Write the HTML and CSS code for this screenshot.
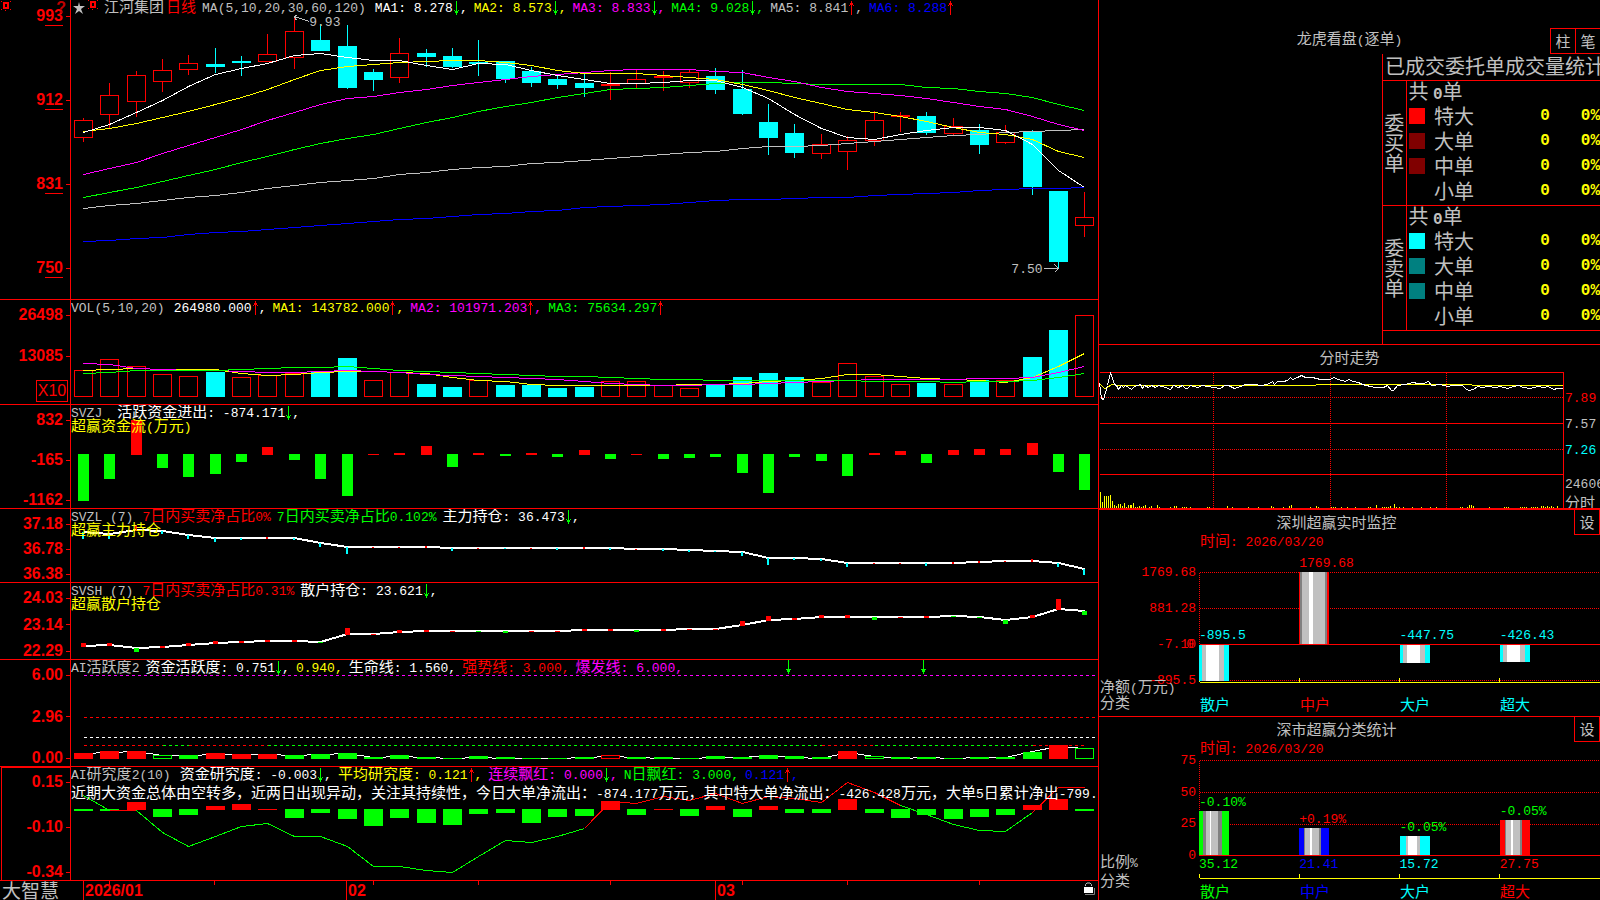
FILE: index.html
```html
<!DOCTYPE html>
<html lang="zh-CN">
<head>
    <meta charset="UTF-8">
    <meta name="viewport" content="width=device-width, initial-scale=1.0">
    <title>江河集团 日线 - 大智慧</title>
    <link rel="stylesheet" href="styles.css">
</head>
<body>

    <svg class="defs" width="0" height="0">
        <symbol id="down" viewBox="0 0 7 14">
            <path d="M3 0h1v14h-1zM2 10h3v2h-3zM1 9h1v1h-1zM5 9h1v1h-1z" fill="#0f0"/>
        </symbol>
        <symbol id="up" viewBox="0 0 7 14">
            <path d="M3 0h1v14h-1zM2 2h3v2h-3zM1 4h1v1h-1zM5 4h1v1h-1z" fill="#f00"/>
        </symbol>
        <symbol id="gear" viewBox="0 0 10 10">
            <path d="M3 2h4v5h-4z" fill="none" stroke="#f00" stroke-width="2"/>
            <path d="M0 0h1v1h-1zM9 0h1v1h-1zM0 8h1v1h-1zM9 8h1v1h-1zM4 9h1v1h-1z" fill="#f00"/>
        </symbol>
    </svg>

    <main class="charts">
        <section class="panel">
            <div class="axis axis-price">
                <svg class="corner" width="10" height="10"><use href="#gear"/></svg>
                <span class="help">?</span>
                <span class="label">9<u>93</u></span>
                <span class="label">9<u>12</u></span>
                <span class="label">8<u>31</u></span>
                <span class="label">7<u>50</u></span>
            </div>
            <div class="plot">
                <svg id="price" viewBox="0 0 1027 299" preserveAspectRatio="none"></svg>
                <div class="legend">
                    <svg class="star" width="12" height="12" viewBox="0 0 12 12"><path d="M6 0l1 4h5l-4 3 2 5-4-3-4 3 2-5-4-3h5z" fill="#c0c0c0"/></svg>
                    <svg class="gear" width="10" height="10"><use href="#gear"/></svg>
                    <span class="silver"><b class="cn">江河集团</b></span>
                    <span class="red period"><b class="cn">日线</b></span>
                    <span class="silver title">MA(5,10,20,30,60,120)</span>
                    <span class="white">MA1: 8.278<svg class="arrow"><use href="#down"/></svg>,</span>
                    <span class="yellow">MA2: 8.573<svg class="arrow"><use href="#down"/></svg>,</span>
                    <span class="magenta">MA3: 8.833<svg class="arrow"><use href="#down"/></svg>,</span>
                    <span class="green">MA4: 9.028<svg class="arrow"><use href="#down"/></svg>,</span>
                    <span class="silver">MA5: 8.841<svg class="arrow"><use href="#up"/></svg>,</span>
                    <span class="blue">MA6: 8.288<svg class="arrow"><use href="#up"/></svg></span>
                </div>
                <span class="mark mark-high">9.93</span>
                <span class="mark mark-low">7.50</span>
            </div>
        </section>

        <section class="panel">
            <div class="axis axis-vol">
                <span class="label">26498</span>
                <span class="label">13085</span>
                <span class="unit">X10</span>
            </div>
            <div class="plot">
                <svg id="volume" viewBox="0 0 1027 104" preserveAspectRatio="none"></svg>
                <div class="legend">
                    <span class="silver title">VOL(5,10,20)</span>
                    <span class="white">264980.000<svg class="arrow"><use href="#up"/></svg>,</span>
                    <span class="yellow">MA1: 143782.000<svg class="arrow"><use href="#up"/></svg>,</span>
                    <span class="magenta">MA2: 101971.203<svg class="arrow"><use href="#up"/></svg>,</span>
                    <span class="green">MA3: 75634.297<svg class="arrow"><use href="#up"/></svg></span>
                </div>
            </div>
        </section>

        <section class="panel">
            <div class="axis">
                <span class="label">832</span>
                <span class="label">-165</span>
                <span class="label">-1162</span>
            </div>
            <div class="plot">
                <svg id="flow" viewBox="0 0 1027 103" preserveAspectRatio="none"></svg>
                <div class="legend">
                    <span class="silver title wide">SVZJ</span>
                    <span class="white"><b class="cn">活跃资金进出</b>: -874.171<svg class="arrow"><use href="#down"/></svg>,</span>
                </div>
                <div class="caption"><b class="cn">超赢资金流</b>(<b class="cn">万元</b>)</div>
            </div>
        </section>

        <section class="panel">
            <div class="axis">
                <span class="label">37.18</span>
                <span class="label">36.78</span>
                <span class="label">36.38</span>
            </div>
            <div class="plot">
                <svg id="major" viewBox="0 0 1027 73" preserveAspectRatio="none"></svg>
                <div class="legend">
                    <span class="silver title">SVZL (7)</span>
                    <span class="red">7<b class="cn">日内买卖净占比</b>0%</span>
                    <span class="green">7<b class="cn">日内买卖净占比</b>0.102%</span>
                    <span class="white"><b class="cn">主力持仓</b>: 36.473<svg class="arrow"><use href="#down"/></svg>,</span>
                </div>
                <div class="caption"><b class="cn">超赢主力持仓</b></div>
            </div>
        </section>

        <section class="panel">
            <div class="axis">
                <span class="label">24.03</span>
                <span class="label">23.14</span>
                <span class="label">22.29</span>
            </div>
            <div class="plot">
                <svg id="retail" viewBox="0 0 1027 76" preserveAspectRatio="none"></svg>
                <div class="legend">
                    <span class="silver title">SVSH (7)</span>
                    <span class="red">7<b class="cn">日内买卖净占比</b>0.31%</span>
                    <span class="white"><b class="cn">散户持仓</b>: 23.621<svg class="arrow"><use href="#down"/></svg>,</span>
                </div>
                <div class="caption"><b class="cn">超赢散户持仓</b></div>
            </div>
        </section>

        <section class="panel">
            <div class="axis">
                <span class="label">6.00</span>
                <span class="label">2.96</span>
                <span class="label">0.00</span>
            </div>
            <div class="plot">
                <svg id="active" viewBox="0 0 1027 106" preserveAspectRatio="none"></svg>
                <div class="legend">
                    <span class="silver">AI<b class="cn">活跃度</b>2</span>
                    <span class="white"><b class="cn">资金活跃度</b>: 0.751<svg class="arrow"><use href="#down"/></svg>,</span>
                    <span class="yellow">0.940,</span>
                    <span class="white"><b class="cn">生命线</b>: 1.560,</span>
                    <span class="red"><b class="cn">强势线</b>: 3.000,</span>
                    <span class="magenta"><b class="cn">爆发线</b>: 6.000,</span>
                </div>
            </div>
        </section>

        <section class="panel">
            <div class="axis selected">
                <span class="label">0.15</span>
                <span class="label">-0.10</span>
                <span class="label">-0.34</span>
            </div>
            <div class="plot">
                <svg id="research" viewBox="0 0 1027 113" preserveAspectRatio="none"></svg>
                <div class="legend">
                    <span class="silver title">AI<b class="cn">研究度</b>2(10)</span>
                    <span class="white"><b class="cn">资金研究度</b>: -0.003<svg class="arrow"><use href="#down"/></svg>,</span>
                    <span class="yellow"><b class="cn">平均研究度</b>: 0.121<svg class="arrow"><use href="#up"/></svg>,</span>
                    <span class="magenta"><b class="cn">连续飘红</b>: 0.000<svg class="arrow"><use href="#down"/></svg>,</span>
                    <span class="green">N<b class="cn">日飘红</b>: 3.000,</span>
                    <span class="blue">0.121<svg class="arrow"><use href="#up"/></svg>,</span>
                </div>
                <div class="message"><b class="cn">近期大资金总体由空转多，近两日出现异动，关注其持续性，今日大单净流出：</b>-874.177<b class="cn">万元，其中特大单净流出：</b>-426.428<b class="cn">万元，大单</b>5<b class="cn">日累计净出</b>-799.</div>
            </div>
        </section>

        <footer class="timeline">
            <div class="brand">大智慧</div>
            <div class="months">
                <svg id="ticks" viewBox="0 0 1027 19" preserveAspectRatio="none"></svg>
                <span></span>
                <span class="month">2026/01</span>
                <span class="month">02</span>
                <span class="month">03</span>
                <svg class="lock" width="12" height="13" viewBox="0 0 12 13">
                    <path d="M2.5 4V2.5L4 1h3l1.500 1.500V4" fill="none" stroke="#c0c0c0"/>
                    <path d="M2 12.500h9.500V6" fill="none" stroke="#808080"/>
                    <path d="M1 5h9v6H1z" fill="#fff"/>
                </svg>
            </div>
        </footer>
    </main>

    <aside class="side">
        <section class="orders">
            <header class="orders-head">
                <h2><b class="cn">龙虎看盘</b>(<b class="cn">逐单</b>)</h2>
                <div class="buttons">
                    <button type="button">柱</button><button type="button">笔</button>
                </div>
            </header>
            <div class="book">
                <h3>已成交委托单成交量统计</h3>
                <table>
                    <colgroup><col class="c-side"><col class="c-swatch"><col class="c-name"><col><col class="c-pct"></colgroup>
                    <tbody>
                        <tr><th rowspan="5" scope="rowgroup">委<br>买<br>单</th><td colspan="4">共 <b>0</b>单</td></tr>
                        <tr><td><i class="swatch buy-1"></i></td><td class="name">特大</td><td class="num">0</td><td class="num">0%</td></tr>
                        <tr><td><i class="swatch buy-2"></i></td><td class="name">大单</td><td class="num">0</td><td class="num">0%</td></tr>
                        <tr><td><i class="swatch buy-2"></i></td><td class="name">中单</td><td class="num">0</td><td class="num">0%</td></tr>
                        <tr><td></td><td class="name">小单</td><td class="num">0</td><td class="num">0%</td></tr>
                    </tbody>
                    <tbody>
                        <tr><th rowspan="5" scope="rowgroup">委<br>卖<br>单</th><td colspan="4">共 <b>0</b>单</td></tr>
                        <tr><td><i class="swatch sell-1"></i></td><td class="name">特大</td><td class="num">0</td><td class="num">0%</td></tr>
                        <tr><td><i class="swatch sell-2"></i></td><td class="name">大单</td><td class="num">0</td><td class="num">0%</td></tr>
                        <tr><td><i class="swatch sell-2"></i></td><td class="name">中单</td><td class="num">0</td><td class="num">0%</td></tr>
                        <tr><td></td><td class="name">小单</td><td class="num">0</td><td class="num">0%</td></tr>
                    </tbody>
                </table>
            </div>
        </section>

        <section class="minute">
            <h2 class="cn">分时走势</h2>
            <div class="minute-body">
                <div class="minute-plot"><svg id="minute" viewBox="0 0 465 136" preserveAspectRatio="none"></svg></div>
                <div class="minute-scale">
                    <span class="red">7.89</span>
                    <span class="silver">7.57</span>
                    <span class="cyan">7.26</span>
                    <span class="silver small first">24606</span>
                    <span class="silver small cn">分时</span>
                </div>
            </div>
        </section>

        <section class="monitor">
            <header><h2 class="cn">深圳超赢实时监控</h2><button type="button">设</button></header>
            <p class="time"><b class="cn">时间</b>: 2026/03/20</p>
            <div class="monitor-body">
                <div class="scale scale-net">
                    <span>1769.68</span><span>881.28</span><span class="zero">-7.10<em>0</em></span><span>-895.5</span>
                </div>
                <div class="heads heads-net">
                    <span><b class="cn">净额</b>(<b class="cn">万元</b>)</span>
                    <span><b class="cn">分类</b></span>
                </div>
                <div class="bars" id="net"></div>
                <div class="names names-net cn">
                    <span class="cyan">散户</span><span class="red">中户</span><span class="cyan">大户</span><span class="cyan">超大</span>
                </div>
            </div>
        </section>

        <section class="monitor">
            <header><h2 class="cn">深市超赢分类统计</h2><button type="button">设</button></header>
            <p class="time"><b class="cn">时间</b>: 2026/03/20</p>
            <div class="monitor-body">
                <div class="scale scale-share">
                    <span>75</span><span>50</span><span>25</span><span>0</span>
                </div>
                <div class="heads heads-share">
                    <span><b class="cn">比例</b>%</span>
                    <span><b class="cn">分类</b></span>
                </div>
                <div class="bars" id="share"></div>
                <div class="names names-share cn">
                    <span class="green">散户</span><span class="blue">中户</span><span class="cyan">大户</span><span class="red">超大</span>
                </div>
            </div>
        </section>
    </aside>

    <script src="charts.js"></script>
</body>
</html>
```
FILE: styles.css
```css
* {
    box-sizing: border-box;
}
body {
    margin: 0;
    height: 100vh;
    display: grid;
    grid-template-columns: minmax(0, 1098fr) minmax(0, 502fr);
    background: #000;
    color: #c0c0c0;
    font: 13px/16px "Liberation Mono", "Noto Sans CJK SC", monospace;
    overflow: hidden;
}
h2, h3, p {
    margin: 0;
    font-weight: normal;
}
.defs {
    position: absolute;
}
.cn {
    font-size: 15px;
    font-weight: normal;
    font-family: "Noto Sans CJK SC", sans-serif;
}
/* keeps the taller Chinese glyphs from growing a 16px text row */
b.cn {
    line-height: 0;
}
.red { color: #f00; }
.green { color: #0f0; }
.blue { color: #00f; }
.cyan { color: #0ff; }
.yellow { color: #ff0; }
.magenta { color: #f0f; }
.white { color: #fff; }
.silver { color: #c0c0c0; }

button {
    width: 26px;
    height: 26px;
    padding: 0;
    background: #000;
    border: 1px solid #f00;
    color: #c0c0c0;
    font: 15px/16px "Noto Sans CJK SC", sans-serif;
}

/* left side: stacked indicator panels */
.charts {
    display: grid;
    grid-template-rows: 300fr 105fr 104fr 74fr 77fr 107fr 114fr 19fr;
    min-height: 0;
}
.panel {
    display: grid;
    grid-template-columns: 71px minmax(0, 1fr);
    border-bottom: 1px solid #f00;
    min-height: 0;
}
.axis {
    position: relative;
    display: flex;
    flex-direction: column;
    justify-content: space-between;
    padding-top: 7px;
    border-right: 1px solid #f00;
    color: #f00;
    font: bold 16px/16px "Liberation Sans", sans-serif;
    min-height: 0;
}
.axis-price {
    padding: 8px 0 23px;
}
.axis-vol {
    display: grid;
    grid-template-columns: 100%;
    grid-template-rows: 41fr 32fr 24px;
}
.axis.selected {
    margin-left: 1px;
    padding-top: 6px;
    border: 1px solid #f00;
    border-bottom: 0;
}
.label {
    display: flex;
    justify-content: flex-end;
    align-items: center;
    height: 16px;
}
.label::after {
    content: "";
    width: 4px;
    height: 1px;
    margin-left: 3px;
    background: #f00;
}
.label u {
    height: 18px;
    text-decoration: none;
    border-bottom: 1px solid #f00;
    margin-top: 2px;
}
.unit {
    justify-self: end;
    width: 32px;
    height: 22px;
    margin-right: 2px;
    border: 1px solid #f00;
    line-height: 20px;
    text-align: center;
    font-weight: normal;
    font-size: 16px;
}
.corner {
    position: absolute;
    left: 1px;
    top: 1px;
}
.help {
    position: absolute;
    right: 4px;
    top: 0;
    color: #c00000;
}
.plot {
    position: relative;
    overflow: hidden;
}
.plot > svg, .minute-plot svg, .bars > svg {
    position: absolute;
    left: 0;
    top: 0;
    width: 100%;
    height: 100%;
    shape-rendering: crispEdges;
}
.legend {
    position: relative;
    display: flex;
    gap: 6px;
    height: 16px;
    padding-top: 1px;
    white-space: pre;
}
.legend > span {
    line-height: 16px;
}
.legend .title {
    margin-right: 3px;
}
.legend .wide {
    margin-right: 9px;
}
.legend .star {
    margin: 1px -3px 0 2px;
}
.legend .gear {
    margin-top: -1px;
}
.legend .period {
    margin-left: -4px;
}
.arrow {
    width: 7px;
    height: 14px;
    vertical-align: top;
    shape-rendering: crispEdges;
}
.caption {
    position: relative;
    color: #ff0;
    line-height: 14px;
}
.message {
    position: relative;
    margin-top: 3px;
    color: #fff;
    white-space: nowrap;
    line-height: 18px;
}
.mark {
    position: absolute;
    color: #c0c0c0;
}
.mark-high {
    left: 23.2%;
    top: 5%;
}
.mark-low {
    right: 5.4%;
    bottom: 7%;
}
.timeline {
    display: grid;
    grid-template-columns: 71px minmax(0, 1fr);
}
.brand {
    padding-left: 2px;
    font: 19px/18px "Noto Sans CJK SC", sans-serif;
}
.months {
    position: relative;
    display: grid;
    grid-template-columns: 12fr 263fr 369fr 383fr;
    font: bold 16px/19px "Liberation Sans", sans-serif;
    color: #f00;
}
.months #ticks {
    position: absolute;
    width: 100%;
    height: 100%;
    shape-rendering: crispEdges;
}
.month {
    padding-left: 1px;
    border-left: 1px solid #f00;
}
.lock {
    position: absolute;
    right: 3px;
    top: 1px;
}

/* right side */
.side {
    display: grid;
    grid-template-rows: 345fr 165fr 207fr 183fr;
    border-left: 1px solid #f00;
    min-width: 0;
    min-height: 0;
    overflow: hidden;
}
.side section {
    border-bottom: 1px solid #f00;
    min-height: 0;
}
.side section:last-child {
    border-bottom: 0;
}
.orders {
    display: flex;
    flex-direction: column;
}
.orders-head {
    display: grid;
    grid-template-columns: 1fr auto 1fr;
    margin-top: 28px;
    height: 26px;
}
.orders-head h2 {
    grid-column: 2;
    font-size: 13px;
    line-height: 26px;
}
.buttons {
    display: flex;
    justify-content: flex-end;
    margin-right: -1px;
}
.buttons button + button {
    margin-left: -1px;
}
.book {
    flex: 1;
    align-self: flex-end;
    width: 218px;
    border-left: 1px solid #f00;
    overflow: hidden;
    font: 20px/24px "Noto Sans CJK SC", sans-serif;
}
.book h3 {
    padding-left: 2px;
    height: 26px;
    font-size: 20px;
    line-height: 24px;
    white-space: nowrap;
}
.book table {
    width: 217px;
    table-layout: fixed;
    border-collapse: collapse;
}
.c-side { width: 23px; }
.c-swatch { width: 28px; }
.c-name { width: 50px; }
.c-pct { width: 50px; }
.book tbody {
    border-top: 1px solid #f00;
    border-bottom: 1px solid #f00;
}
.book th {
    padding: 0;
    border-right: 1px solid #f00;
    font-weight: normal;
    line-height: 20px;
}
.book tr {
    height: 25px;
}
.book td {
    padding: 0 0 0 2px;
    height: 25px;
    line-height: 20px;
    vertical-align: top;
    white-space: pre;
}
.book td.name {
    padding: 0;
}
.book td.num {
    padding: 0;
    text-align: right;
    color: #ff0;
    font: bold 16px/20px "Liberation Mono", monospace;
}
.book td b {
    font: bold 16px/16px "Liberation Mono", monospace;
}
.swatch {
    display: block;
    width: 16px;
    height: 16px;
    margin-top: 2px;
}
.buy-1 { background: #f00; }
.buy-2 { background: #800000; }
.sell-1 { background: #0ff; }
.sell-2 { background: #008080; }

.minute {
    display: flex;
    flex-direction: column;
}
.side .minute {
    border-bottom-width: 2px;
}
.minute h2 {
    height: 27px;
    line-height: 23px;
    text-align: center;
}
.minute-body {
    flex: 1;
    display: grid;
    grid-template-columns: minmax(0, 1fr) 36px;
    min-height: 0;
}
.minute-plot {
    position: relative;
}
.minute-scale {
    display: flex;
    flex-direction: column;
    padding: 14px 0 0 1px;
    overflow: hidden;
}
.minute-scale span {
    line-height: 26px;
}
.minute-scale .small {
    line-height: 17px;
}
.minute-scale .first {
    margin-top: 12px;
}

.monitor header {
    display: flex;
    height: 25px;
}
.monitor h2 {
    flex: 1;
    text-align: center;
    line-height: 24px;
}
.monitor header button {
    border-top: 0;
    height: 25px;
}
.time {
    padding-left: 101px;
    height: 16px;
    color: #f00;
    line-height: 16px;
}
.monitor-body {
    display: grid;
    grid-template-columns: 100px minmax(0, 1fr);
    grid-template-rows: auto auto;
}
.scale, .heads {
    grid-column: 1;
    grid-row: 1 / 3;
}
.scale {
    display: flex;
    flex-direction: column;
    align-items: flex-end;
    justify-content: space-between;
    padding-right: 3px;
    color: #f00;
}
.scale-net {
    height: 124px;
    margin-top: 14px;
}
.scale-share {
    height: 111px;
    margin-top: -5px;
}
.zero {
    position: relative;
}
.zero em {
    position: absolute;
    right: 2px;
    font-style: normal;
}
.heads {
    display: flex;
    flex-direction: column;
    padding-left: 1px;
}
.heads-net {
    padding-top: 130px;
}
.heads-share {
    padding-top: 98px;
    gap: 3px;
}
.bars {
    grid-column: 2;
    position: relative;
    display: grid;
    grid-template-columns: repeat(4, 1fr);
}
#net { height: 132px; }
#share { height: 121px; }
.col {
    position: relative;
}
.col span {
    position: absolute;
    left: 0;
}
.col i {
    position: absolute;
    left: 0;
    width: 30px;
}
.names {
    grid-column: 2;
    display: grid;
    grid-template-columns: repeat(4, 1fr);
    padding-left: 1px;
}
.names-net { padding-top: 12px; }
.names-share { padding-top: 4px; }
```
FILE: charts.js
```js
const RED = '#f00', GREEN = '#0f0', CYAN = '#0ff', WHITE = '#fff';
const YELLOW = '#ff0', MAGENTA = '#f0f', SILVER = '#c0c0c0', GRAY = '#808080', BLUE = '#00f';

const x = i => Math.round(12 + 26.35 * i);

function add(svg, tag, attrs) {
    const el = document.createElementNS('http://www.w3.org/2000/svg', tag);
    for (const key in attrs) el.setAttribute(key, attrs[key]);
    svg.appendChild(el);
    return el;
}

function rect(svg, left, top, w, h, color, hollow) {
    if (hollow) {
        add(svg, 'rect', { x: left + 0.5, y: top + 0.5, width: w - 1, height: h - 1, fill: '#000', stroke: color, 'vector-effect': 'non-scaling-stroke' });
    } else {
        add(svg, 'rect', { x: left, y: top, width: w, height: h, fill: color });
    }
}

function line(svg, points, color, width = 1, dash = '') {
    add(svg, 'polyline', {
        points: points.map(p => (p[0] + 0.5) + ',' + (p[1] + 0.5)).join(' '),
        fill: 'none', stroke: color, 'stroke-width': width, 'stroke-dasharray': dash,
        'vector-effect': 'non-scaling-stroke'
    });
}

const series = (svg, values, color, width) => line(svg, values.map((v, i) => [x(i), v]), color, width);

// signed bars: positive go up in one colour, negative go down in the other
function signedBars(svg, values, zero, width, up, down) {
    values.forEach((v, i) => {
        const left = x(i) - Math.floor(width / 2);
        const base = Array.isArray(zero) ? zero[i] : zero;
        if (v > 0) rect(svg, left, base + 1 - v, width, v, up);
        else rect(svg, left, base, width, -v, down);
    });
}

// daily candles: high, body top, body bottom, low, kind (r hollow, f flat red, c falling)
const candles = [
    [118,120,137,142,'r'],[83,95,114,128,'r'],[71,75,101,117,'r'],[59,70,81,92,'r'],[55,63,69,75,'r'],
    [48,64,67,73,'c'],[56,61,63,76,'c'],[34,54,61,62,'r'],[16,31,57,69,'r'],[24,40,51,51,'c'],
    [25,46,88,89,'c'],[69,72,80,91,'c'],[38,53,77,83,'r'],[49,53,57,67,'c'],[48,56,67,68,'c'],
    [40,62,64,76,'c'],[61,61,79,83,'c'],[67,71,83,87,'c'],[75,79,85,89,'c'],[73,83,88,97,'c'],
    [72,84,86,100,'f'],[70,79,83,88,'r'],[71,76,78,91,'f'],[69,72,82,88,'r'],[68,76,90,94,'c'],
    [70,89,114,115,'c'],[104,122,138,155,'c'],[124,133,153,158,'c'],[134,144,153,159,'r'],[136,140,151,170,'r'],
    [111,120,140,146,'r'],[112,115,117,132,'f'],[112,116,133,135,'c'],[118,126,133,135,'r'],[124,130,145,154,'c'],
    [125,132,142,144,'r'],[130,132,187,195,'c'],[191,191,262,268,'c'],[192,217,225,237,'r']
];

const price = document.getElementById('price');
candles.forEach(([high, top, bottom, low, kind], i) => {
    const color = kind === 'c' ? CYAN : RED;
    rect(price, x(i), high, 1, low - high, color);
    rect(price, x(i) - 9, top, 19, bottom - top + (kind === 'r' ? 1 : 0), color, kind === 'r');
});
series(price, [241,240,238,237,234,232,231,229,227,225,223,221,219,218,216,214,213,211,210,207,206,205,204,202,200,199,199,198,197,197,195,194,193,192,190,189,188,188,187], BLUE);
series(price, [208,205,203,200,197,195,192,188,185,182,180,178,174,172,169,167,166,163,162,160,158,156,154,152,151,148,146,146,145,143,141,139,137,135,134,132,131,130,129], SILVER);
series(price, [197,192,187,181,175,169,162,156,149,143,138,134,128,122,117,111,106,102,97,93,89,88,87,85,83,82,82,83,84,84,84,84,87,88,91,93,97,104,110], GREEN);
series(price, [174,168,162,153,145,137,129,120,112,104,98,96,92,89,85,82,79,76,74,72,70,69,69,69,71,72,77,81,87,91,93,95,98,102,106,109,116,124,130], MAGENTA);
series(price, [131,128,123,117,111,104,97,89,79,70,66,64,62,61,60,60,62,65,70,73,73,73,75,77,79,84,90,97,103,109,112,116,121,127,132,134,139,151,157], YELLOW);
series(price, [132,124,112,100,86,74,68,63,55,53,57,60,60,65,69,63,64,70,75,79,83,83,82,80,80,87,98,114,128,137,139,134,130,127,127,130,144,170,187], WHITE);
line(price, [[238, 21], [223, 16]], SILVER);
line(price, [[226, 14], [223, 16], [225, 20]], SILVER);
line(price, [[972, 268], [987, 268]], SILVER);
line(price, [[983, 264], [987, 268], [983, 272]], SILVER);

const volume = document.getElementById('volume');
const risingDays = [6, 11, 15];
[70,59,66,74,76,72,77,75,73,72,58,80,72,84,87,80,85,85,88,87,81,81,85,88,85,77,73,77,82,63,76,84,83,84,80,80,57,30,15].forEach((top, i) => {
    const falling = candles[i][4] === 'c' && !risingDays.includes(i);
    rect(volume, x(i) - 9, top, 19, 97 - top, falling ? CYAN : RED, !falling);
});
series(volume, [70,69,68,69,69,69,73,75,74,72,71,71,72,73,77,80,81,84,85,85,85,85,85,84,84,83,81,80,78,74,74,76,78,79,80,82,77,66,53], YELLOW);
series(volume, [63,64,68,69,70,70,71,72,72,71,70,71,72,74,75,76,77,78,79,81,83,84,85,85,84,84,83,82,81,80,79,79,79,79,78,78,77,72,66], MAGENTA);
series(volume, [73,72,70,70,70,70,69,68,67,67,66,68,70,71,72,73,74,75,76,76,77,78,79,79,80,80,80,80,80,80,81,81,81,82,81,81,80,77,73], GREEN);

signedBars(document.getElementById('flow'),
    [-47,-25,35,-14,-23,-20,-8,8,-6,-25,-42,1,2,9,-13,2,-2,2,-3,5,-5,1,-5,-4,-3,-19,-39,-3,-7,-22,2,4,-9,5,6,6,12,-18,-36],
    49, 11, RED, GREEN);

const major = document.getElementById('major');
const majorLine = [23,25,21,22,26,29,29,29,29,34,38,38,38,38,39,39,39,39,39,39,39,40,40,41,42,43,49,49,50,54,54,54,54,54,53,52,52,54,60];
series(major, majorLine.map(v => v - 0.5), WHITE, 2);
signedBars(major, [-7,-5,6,-3,-4,-4,-2,2,-2,-4,-7,1,1,2,-3,1,-1,1,-2,2,-2,1,-2,-2,-1,-4,-7,-2,-2,-4,1,1,-3,2,2,1,3,-4,-6],
    majorLine, 2, RED, CYAN);

const retail = document.getElementById('retail');
const retailLine = [63,62,65,64,62,60,59,58,58,59,51,51,49,48,48,48,48,48,48,47,47,47,47,46,46,42,37,36,34,34,34,34,34,33,34,37,34,26,28];
series(retail, retailLine.map(v => v - 0.5), WHITE, 2);
signedBars(retail, [4,3,-4,2,3,3,2,2,2,-1,7,1,3,2,1,-1,-2,1,1,2,2,-2,2,1,1,5,5,2,3,3,-3,1,2,-1,-1,-4,3,11,-4],
    retailLine, 5, RED, GREEN);

const active = document.getElementById('active');
line(active, [[12, 15], [1026, 15]], MAGENTA, 1, '3 3');
line(active, [[12, 57], [1026, 57]], RED, 1, '3 3');
line(active, [[12, 77], [1026, 77]], WHITE, 1, '3 3');
[[0, 3, RED], [3, 4, GREEN], [4, 7, RED], [7, 28, GREEN], [28, 30, RED], [30, 36, GREEN], [36, 38, RED]].forEach(([from, to, color]) => {
    line(active, [[x(from), 85], [x(to), 85]], color, 1, '3 3');
});
series(active, [93,92,91,95,95,94,94,94,95,94,93,97,96,97,98,97,98,98,98,97,96,97,98,98,97,97,95,97,98,92,96,98,97,98,97,97,91,86,88], WHITE);
const hollowDays = [3, 20, 30, 38];
const redDays = [0, 1, 2, 5, 6, 7, 20, 29, 37];
[6,8,8,4,4,6,5,5,4,5,6,2,4,2,1,3,2,1,1,2,4,2,2,1,3,2,4,3,2,8,3,2,2,1,2,2,7,14,11].forEach((h, i) => {
    rect(active, x(i) - 9, 99 - h, 19, h, redDays.includes(i) ? RED : GREEN, hollowDays.includes(i));
});
[717, 852].forEach(left => {
    rect(active, left, 0, 1, 14, GREEN);
    rect(active, left - 1, 10, 3, 2, GREEN);
    rect(active, left - 2, 9, 5, 1, GREEN);
});

const research = document.getElementById('research');
signedBars(research, [-2,-2,8,-8,-6,4,6,1,-9,-4,-10,-17,-9,-14,-16,-5,-4,-14,-8,-7,9,-6,1,-7,4,-8,4,-4,-4,11,-4,-9,-6,-10,-8,-6,5,11,-2],
    42, 19, RED, GREEN);
const trend = [28,43,43,65,79,69,59,56,69,69,79,99,99,103,105,89,73,75,69,61,34,36,29,33,26,36,29,31,35,15,25,38,47,57,63,64,45,20,20];
[[0, 1, GREEN], [1, 2, RED], [2, 19, GREEN], [19, 31, RED], [31, 36, GREEN], [36, 38, RED]].forEach(([from, to, color]) => {
    line(research, trend.slice(from, to + 1).map((v, i) => [x(from + i), v]), color);
});

const ticks = document.getElementById('ticks');
[38, 143, 302, 407, 539, 671, 776, 908].forEach(left => rect(ticks, left, 0, 1, 4, RED));

// intraday chart
const minute = document.getElementById('minute');
[0, 51, 102].forEach(y => line(minute, [[0, y], [464, y]], RED));
[25, 77].forEach(y => line(minute, [[0, y], [464, y]], RED, 1, '1 1'));
[114, 231, 347].forEach(left => line(minute, [[left, 0], [left, 136]], RED, 1, '1 1'));
line(minute, [[464, 0], [464, 136]], RED);
const trades = {
    1: 16, 3: 6, 5: 12, 7: 12, 9: 12, 11: 13, 13: 7, 15: 3, 17: 2, 19: 4, 21: 4, 23: 2, 25: 5, 27: 1, 29: 3, 31: 3, 32: 3, 34: 5,
    36: 1, 38: 1, 40: 2, 42: 1, 44: 2, 46: 3, 50: 1, 52: 2, 58: 3, 60: 1, 71: 1, 75: 2, 77: 2, 83: 1, 85: 1, 87: 1, 91: 1,
    108: 1, 110: 1, 128: 2, 133: 1, 149: 1, 159: 1, 172: 2, 174: 1, 184: 1, 190: 2, 192: 3, 211: 1, 217: 2, 219: 1, 232: 1,
    234: 1, 236: 1, 242: 1, 248: 1, 256: 1, 269: 1, 271: 1, 277: 3, 283: 1, 285: 1, 287: 1, 289: 1, 291: 2, 295: 4, 297: 1,
    300: 1, 304: 1, 313: 1, 322: 1, 331: 1, 337: 1, 361: 1, 363: 1, 368: 1, 370: 3, 372: 3, 374: 2, 390: 1, 405: 1, 407: 1,
    409: 1, 421: 1, 423: 1, 425: 1, 427: 1, 432: 1, 434: 1, 436: 1, 438: 1, 442: 2, 444: 2, 446: 1, 448: 2, 450: 1, 452: 2, 454: 1, 458: 2
};
for (const left in trades) rect(minute, Number(left), 136 - trades[left], 1, trades[left], YELLOW);
line(minute, [[0,11],[5,16],[8,15],[12,12],[20,13],[216,13],[217,12],[372,12],[373,13],[463,13]], YELLOW);
line(minute, [
    [0,11],[2,26],[4,27],[8,13],[11,0],[15,12],[17,13],[19,17],[22,13],[24,15],[26,13],[32,17],[35,14],[41,12],[43,16],[45,13],
    [49,15],[52,13],[56,15],[59,13],[66,15],[71,17],[74,13],[79,15],[83,13],[86,16],[88,16],[91,13],[98,15],[103,13],[108,14],
    [114,15],[121,16],[125,13],[129,13],[135,16],[141,14],[146,12],[156,12],[161,13],[168,12],[173,9],[175,12],[178,9],[184,9],
    [188,8],[191,5],[193,7],[198,5],[202,3],[206,5],[213,5],[221,7],[231,7],[234,5],[239,7],[246,9],[249,7],[254,9],[259,10],
    [263,12],[271,14],[276,15],[284,15],[288,13],[292,18],[294,18],[298,13],[306,12],[313,10],[319,11],[324,11],[329,9],[332,13],
    [341,12],[348,14],[353,13],[363,13],[366,16],[369,18],[374,17],[378,14],[383,15],[388,14],[396,15],[401,14],[408,16],[414,14],
    [419,13],[424,15],[431,16],[438,14],[444,15],[449,14],[454,17],[458,16],[463,16]
], WHITE);

// cylinder bars: list of [color, width] stripes from left to right
function stripes(list) {
    let pos = 0;
    return 'linear-gradient(to right, ' + list.map(([color, w]) => {
        const part = `${color} ${pos}px ${pos + w}px`;
        pos += w;
        return part;
    }).join(', ') + ')';
}

function barChart(id, height, dotted, zero, bottom, bars) {
    const box = document.getElementById(id);
    box.innerHTML = `<svg viewBox="0 0 401 ${height}" preserveAspectRatio="none"></svg>`;
    const svg = box.firstChild;
    dotted.forEach(y => line(svg, [[0, y], [401, y]], RED, 1, '1 1'));
    line(svg, [[0, dotted[0]], [0, zero]], RED, 1, '1 1');
    line(svg, [[0, zero], [401, zero]], RED);
    line(svg, [[0, bottom], [401, bottom]], YELLOW);
    bars.forEach((bar, i) => {
        rect(svg, i * 100, bottom - 4, 1, 4, YELLOW);
        const col = document.createElement('div');
        col.className = 'col';
        col.innerHTML = `<i style="top:${bar.top}px;height:${bar.height}px;background:${stripes(bar.fill)}"></i>
            <span style="top:${bar.labelTop}px;color:${bar.labelColor}">${bar.label}</span>`;
        if (bar.share) col.innerHTML += `<span style="top:99px;color:${bar.color}">${bar.share}</span>`;
        box.appendChild(col);
    });
}

const falling = [[CYAN, 3], [SILVER, 4], [WHITE, 13], [SILVER, 5], [CYAN, 5]];
barChart('net', 132, [21, 57, 129], 93, 131, [
    { label: '-895.5', labelColor: CYAN, labelTop: 77, top: 94, height: 36, fill: falling },
    { label: '1769.68', labelColor: RED, labelTop: 5, top: 21, height: 72, fill: [[RED, 1], [GRAY, 2], [SILVER, 7], [WHITE, 4], [SILVER, 12], [GRAY, 2], [RED, 2]] },
    { label: '-447.75', labelColor: CYAN, labelTop: 77, top: 94, height: 18, fill: falling },
    { label: '-426.43', labelColor: CYAN, labelTop: 77, top: 94, height: 17, fill: falling }
]);
barChart('share', 121, [2, 34, 66], 97, 120, [
    { label: '-0.10%', labelColor: GREEN, labelTop: 37, top: 53, height: 44, share: '35.12', color: GREEN,
      fill: [[GREEN, 4], [GRAY, 3], [SILVER, 4], [WHITE, 1], [SILVER, 7], [GRAY, 4], [GREEN, 7]] },
    { label: '+0.19%', labelColor: RED, labelTop: 54, top: 70, height: 27, share: '21.41', color: BLUE,
      fill: [[BLUE, 5], [GRAY, 1], [SILVER, 5], [WHITE, 2], [SILVER, 7], [GRAY, 2], [BLUE, 8]] },
    { label: '-0.05%', labelColor: GREEN, labelTop: 62, top: 78, height: 19, share: '15.72', color: CYAN,
      fill: [[CYAN, 6], [SILVER, 2], [WHITE, 9], [SILVER, 3], [CYAN, 10]] },
    { label: '-0.05%', labelColor: GREEN, labelTop: 46, top: 62, height: 35, share: '27.75', color: RED,
      fill: [[RED, 5], [GRAY, 1], [SILVER, 5], [WHITE, 2], [SILVER, 7], [GRAY, 2], [RED, 8]] }
]);
```
